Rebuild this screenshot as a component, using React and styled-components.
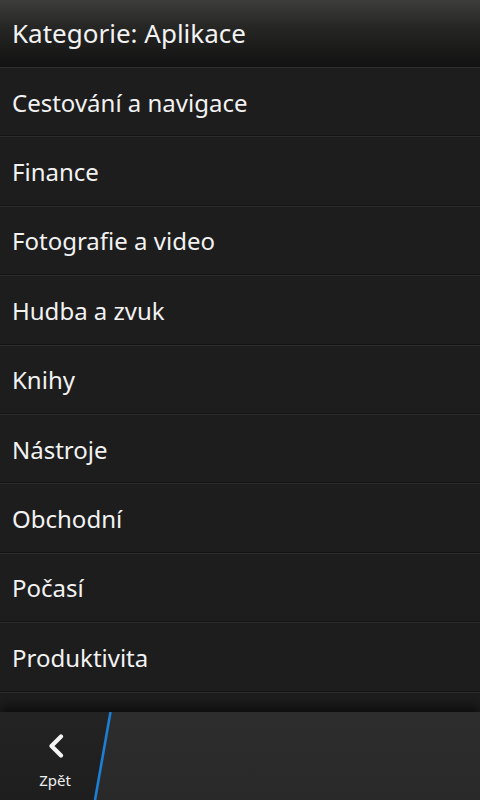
import React from 'react';
import styled, { createGlobalStyle } from 'styled-components';

const categories = [
  'Cestování a navigace',
  'Finance',
  'Fotografie a video',
  'Hudba a zvuk',
  'Knihy',
  'Nástroje',
  'Obchodní',
  'Počasí',
  'Produktivita',
];

const GlobalStyle = createGlobalStyle`
  html, body {
    margin: 0;
    padding: 0;
    background: #1c1c1c;
  }
  body {
    font-family: "Noto Sans", "Open Sans", sans-serif;
  }
`;

const Screen = styled.div`
  width: 480px;
  height: 800px;
  display: flex;
  flex-direction: column;
  overflow: hidden;
  background: #1d1d1d;
`;

const TitleBar = styled.header`
  height: 68px;
  flex: none;
  display: flex;
  align-items: center;
  padding: 0 12px 2px;
  box-sizing: border-box;
  background: linear-gradient(to bottom, #3d3d3b 0%, #262625 40%, #151515 90%, #121212 100%);
  border-bottom: 1px solid #2e2e2e;
  color: #f2f2f2;
  font-size: 26px;
`;

const List = styled.div`
  flex: 1;
  overflow: hidden;
  display: flex;
  flex-direction: column;
`;

const Row = styled.div`
  height: 69.4px;
  flex: none;
  box-sizing: border-box;
  display: flex;
  align-items: center;
  padding: 0 12px;
  border-bottom: 1px solid #2c2c2c;
  box-shadow: inset 0 -2px 0 -1px #141414;
  color: #f2f2f2;
  font-size: 24px;
`;

const ActionBar = styled.footer`
  height: 88px;
  flex: none;
  position: relative;
  display: flex;
  background: linear-gradient(to bottom, #2d2d2d, #292929);
  box-shadow: 0 -6px 10px rgba(0, 0, 0, 0.55);
`;

const BackButton = styled.button`
  width: 112px;
  border: none;
  margin: 0;
  padding: 22px 0 0;
  background: linear-gradient(to bottom, #232323, #1e1e1e);
  clip-path: polygon(0 0, 111px 0, 95px 100%, 0 100%);
  display: flex;
  flex-direction: column;
  align-items: center;
  justify-content: flex-start;
  box-sizing: border-box;
  font-family: "Noto Sans", "Open Sans", sans-serif;
  color: #eeeeee;
  font-size: 15px;
`;

const BackLabel = styled.span`
  margin-top: 12px;
  padding-right: 2px;
`;

const Slant = styled.svg`
  position: absolute;
  left: 90px;
  top: 0;
  pointer-events: none;
`;

export default function App() {
  return (
    <>
      <GlobalStyle />
      <Screen>
        <TitleBar>Kategorie: Aplikace</TitleBar>
        <List>
          {categories.map((c) => (
            <Row key={c}>{c}</Row>
          ))}
        </List>
        <ActionBar>
          <BackButton>
            <svg width="18" height="24" viewBox="0 0 18 24">
              <path
                d="M14 2.5 L4.5 12 L14 21.5"
                fill="none"
                stroke="#f4f4f4"
                strokeWidth="4.2"
                strokeLinecap="round"
                strokeLinejoin="round"
              />
            </svg>
            <BackLabel>Zpět</BackLabel>
          </BackButton>
          <Slant width="26" height="88" viewBox="0 0 26 88">
            <line x1="20.5" y1="0" x2="5" y2="88" stroke="#1b7fd4" strokeWidth="2.6" />
          </Slant>
        </ActionBar>
      </Screen>
    </>
  );
}
